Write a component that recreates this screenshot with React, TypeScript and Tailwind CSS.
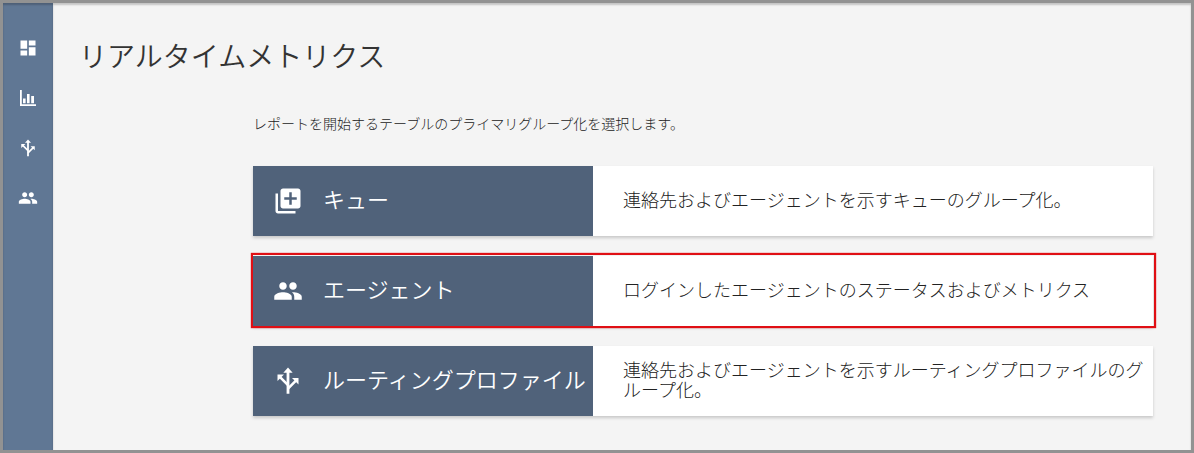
import type { ReactNode } from "react";
import { MdDashboard, MdLibraryAdd, MdPeople } from "react-icons/md";

function ChartIcon({ className }: { className?: string }) {
  return (
    <svg className={className} viewBox="0 0 20 20" fill="currentColor">
      <path d="M2 2h1.8v14.2H18V18H2z" />
      <path d="M5 10.6h2.6v4.6H5zM9 6h2.6v9.2H9zM13.2 8h2.8v7.2h-2.8z" />
    </svg>
  );
}

function RoutingIcon({ className }: { className?: string }) {
  return (
    <svg className={className} viewBox="0 0 24 24" fill="currentColor">
      <path d="M12 0.5 16 5H8z" />
      <path d="M10.8 4h2.4v19h-2.4z" />
      <path d="M3 6.5h5.6L3 12z" />
      <path d="M21 9.5V15L15.4 9.5z" />
      <path
        d="M5 8.5 12 15.6M19 11.5 12 18.6"
        fill="none"
        stroke="currentColor"
        strokeWidth={2.2}
      />
    </svg>
  );
}

const navItems: { label: string; icon: ReactNode }[] = [
  { label: "ダッシュボード", icon: <MdDashboard className="w-5 h-5" /> },
  { label: "メトリクス", icon: <ChartIcon className="w-5 h-5" /> },
  { label: "ルーティング", icon: <RoutingIcon className="w-[18px] h-[18px]" /> },
  { label: "ユーザー", icon: <MdPeople className="w-5 h-5" /> },
];

const groups: {
  title: string;
  description: string;
  icon: ReactNode;
  selected?: boolean;
}[] = [
  {
    title: "キュー",
    description: "連絡先およびエージェントを示すキューのグループ化。",
    icon: <MdLibraryAdd className="w-[30px] h-[30px]" />,
  },
  {
    title: "エージェント",
    description: "ログインしたエージェントのステータスおよびメトリクス",
    icon: <MdPeople className="w-[30px] h-[30px]" />,
    selected: true,
  },
  {
    title: "ルーティングプロファイル",
    description:
      "連絡先およびエージェントを示すルーティングプロファイルのグループ化。",
    icon: <RoutingIcon className="w-7 h-7" />,
  },
];

export default function App() {
  return (
    <div
      lang="ja"
      className="flex min-h-screen border-3 border-[#929292] bg-[#f4f4f4] font-['Noto_Sans_CJK_JP',sans-serif] font-light text-[#222]"
    >
      {/* Side navigation */}
      <nav className="w-[50px] shrink-0 bg-[#607794] pt-5 text-white shadow-[inset_0_2px_2px_rgba(0,0,0,0.2)]">
        {navItems.map((item) => (
          <a
            key={item.label}
            href="#"
            aria-label={item.label}
            className="flex h-[50px] items-center justify-center"
          >
            {item.icon}
          </a>
        ))}
      </nav>

      <main className="min-w-0 flex-1 pt-8 pr-[38px] pl-[26px] shadow-[inset_0_2px_2px_rgba(0,0,0,0.2)]">
        <h1 className="text-[28px] leading-10 font-[350] text-[#333]">
          リアルタイムメトリクス
        </h1>

        <div className="mt-[38px] pl-[174px]">
          <p className="text-sm leading-5">
            レポートを開始するテーブルのプライマリグループ化を選択します。
          </p>

          <div className="mt-[33px] flex flex-col gap-5">
            {groups.map((group) => (
              <button
                key={group.title}
                type="button"
                className="relative flex min-h-[70px] w-full bg-white text-left shadow-[0_2px_3px_rgba(0,0,0,0.18)] hover:cursor-pointer"
              >
                <span className="flex w-[340px] shrink-0 items-center self-stretch bg-[#50627a] text-white">
                  <span className="flex w-[70px] shrink-0 items-center justify-center">
                    {group.icon}
                  </span>
                  <span className="pb-1.5 text-[22px] leading-7 font-[350] whitespace-nowrap">
                    {group.title}
                  </span>
                </span>
                <span className="min-w-0 flex-1 self-center pb-1 pl-[30px] text-lg leading-5">
                  {group.description}
                </span>
                {group.selected && (
                  <span className="absolute -top-[3px] -right-[3px] -bottom-0.5 -left-0.5 border-2 border-[#e00f14] shadow-[0_0_1px_#e00f14]" />
                )}
              </button>
            ))}
          </div>
        </div>
      </main>
    </div>
  );
}
